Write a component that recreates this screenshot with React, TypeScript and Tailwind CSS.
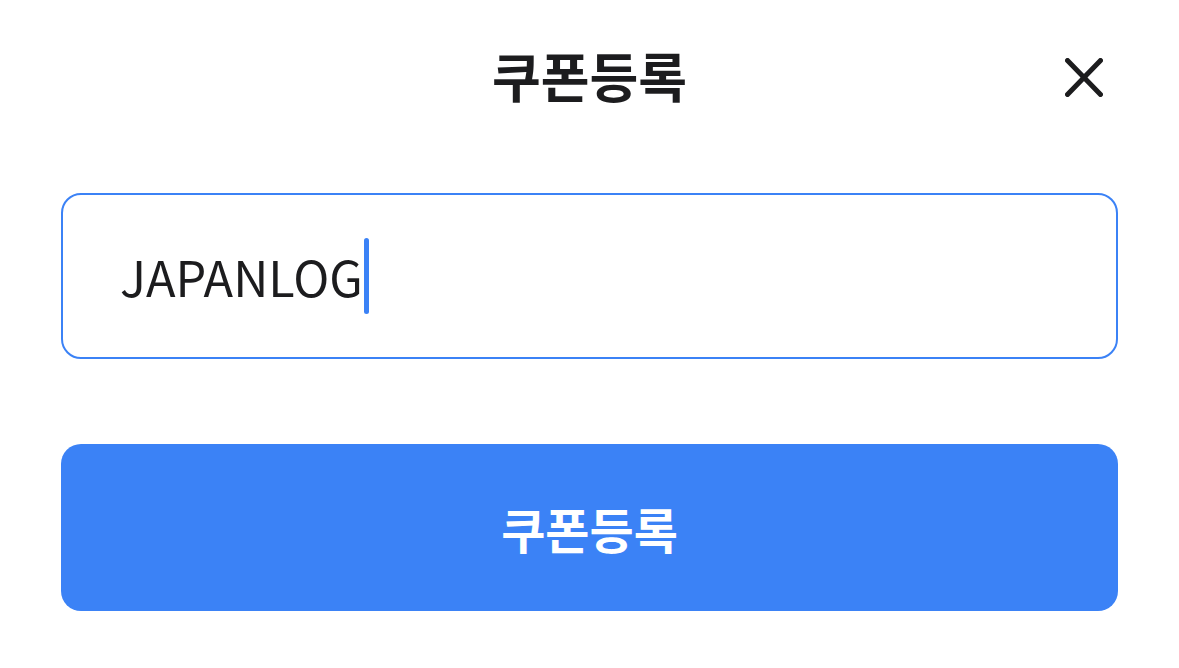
export default function App() {
  return (
    <div
      className="w-[1179px] h-[668px] bg-white px-[61px] text-[#1c1c1e]"
      style={{ fontFamily: '"Noto Sans CJK KR", "Noto Sans", sans-serif' }}
    >
      <div className="relative flex h-[152px] items-center justify-center">
        <h1 className="-mt-[2px] text-[53px] font-bold leading-none">쿠폰등록</h1>
        <button className="absolute right-[15px] top-[58px]">
          <svg width="38" height="39" viewBox="0 0 38 39" fill="none" stroke="currentColor" strokeWidth="5" strokeLinecap="round">
            <path d="M2.5 2.5 L35.5 36.5" />
            <path d="M35.5 2.5 L2.5 36.5" />
          </svg>
        </button>
      </div>

      <div className="mt-[41px] flex h-[166px] items-center rounded-[20px] border-2 border-[#3b82f6] pl-[57px]">
        <span className="text-[48.6px] leading-none">JAPANLOG</span>
        <span className="ml-[1px] h-[76px] w-[5px] rounded-full bg-[#3b82f6]" />
      </div>

      <button className="mt-[85px] flex h-[167px] w-full items-center justify-center rounded-[20px] bg-[#3b82f6] text-[48px] font-bold text-white">
        쿠폰등록
      </button>
    </div>
  )
}
